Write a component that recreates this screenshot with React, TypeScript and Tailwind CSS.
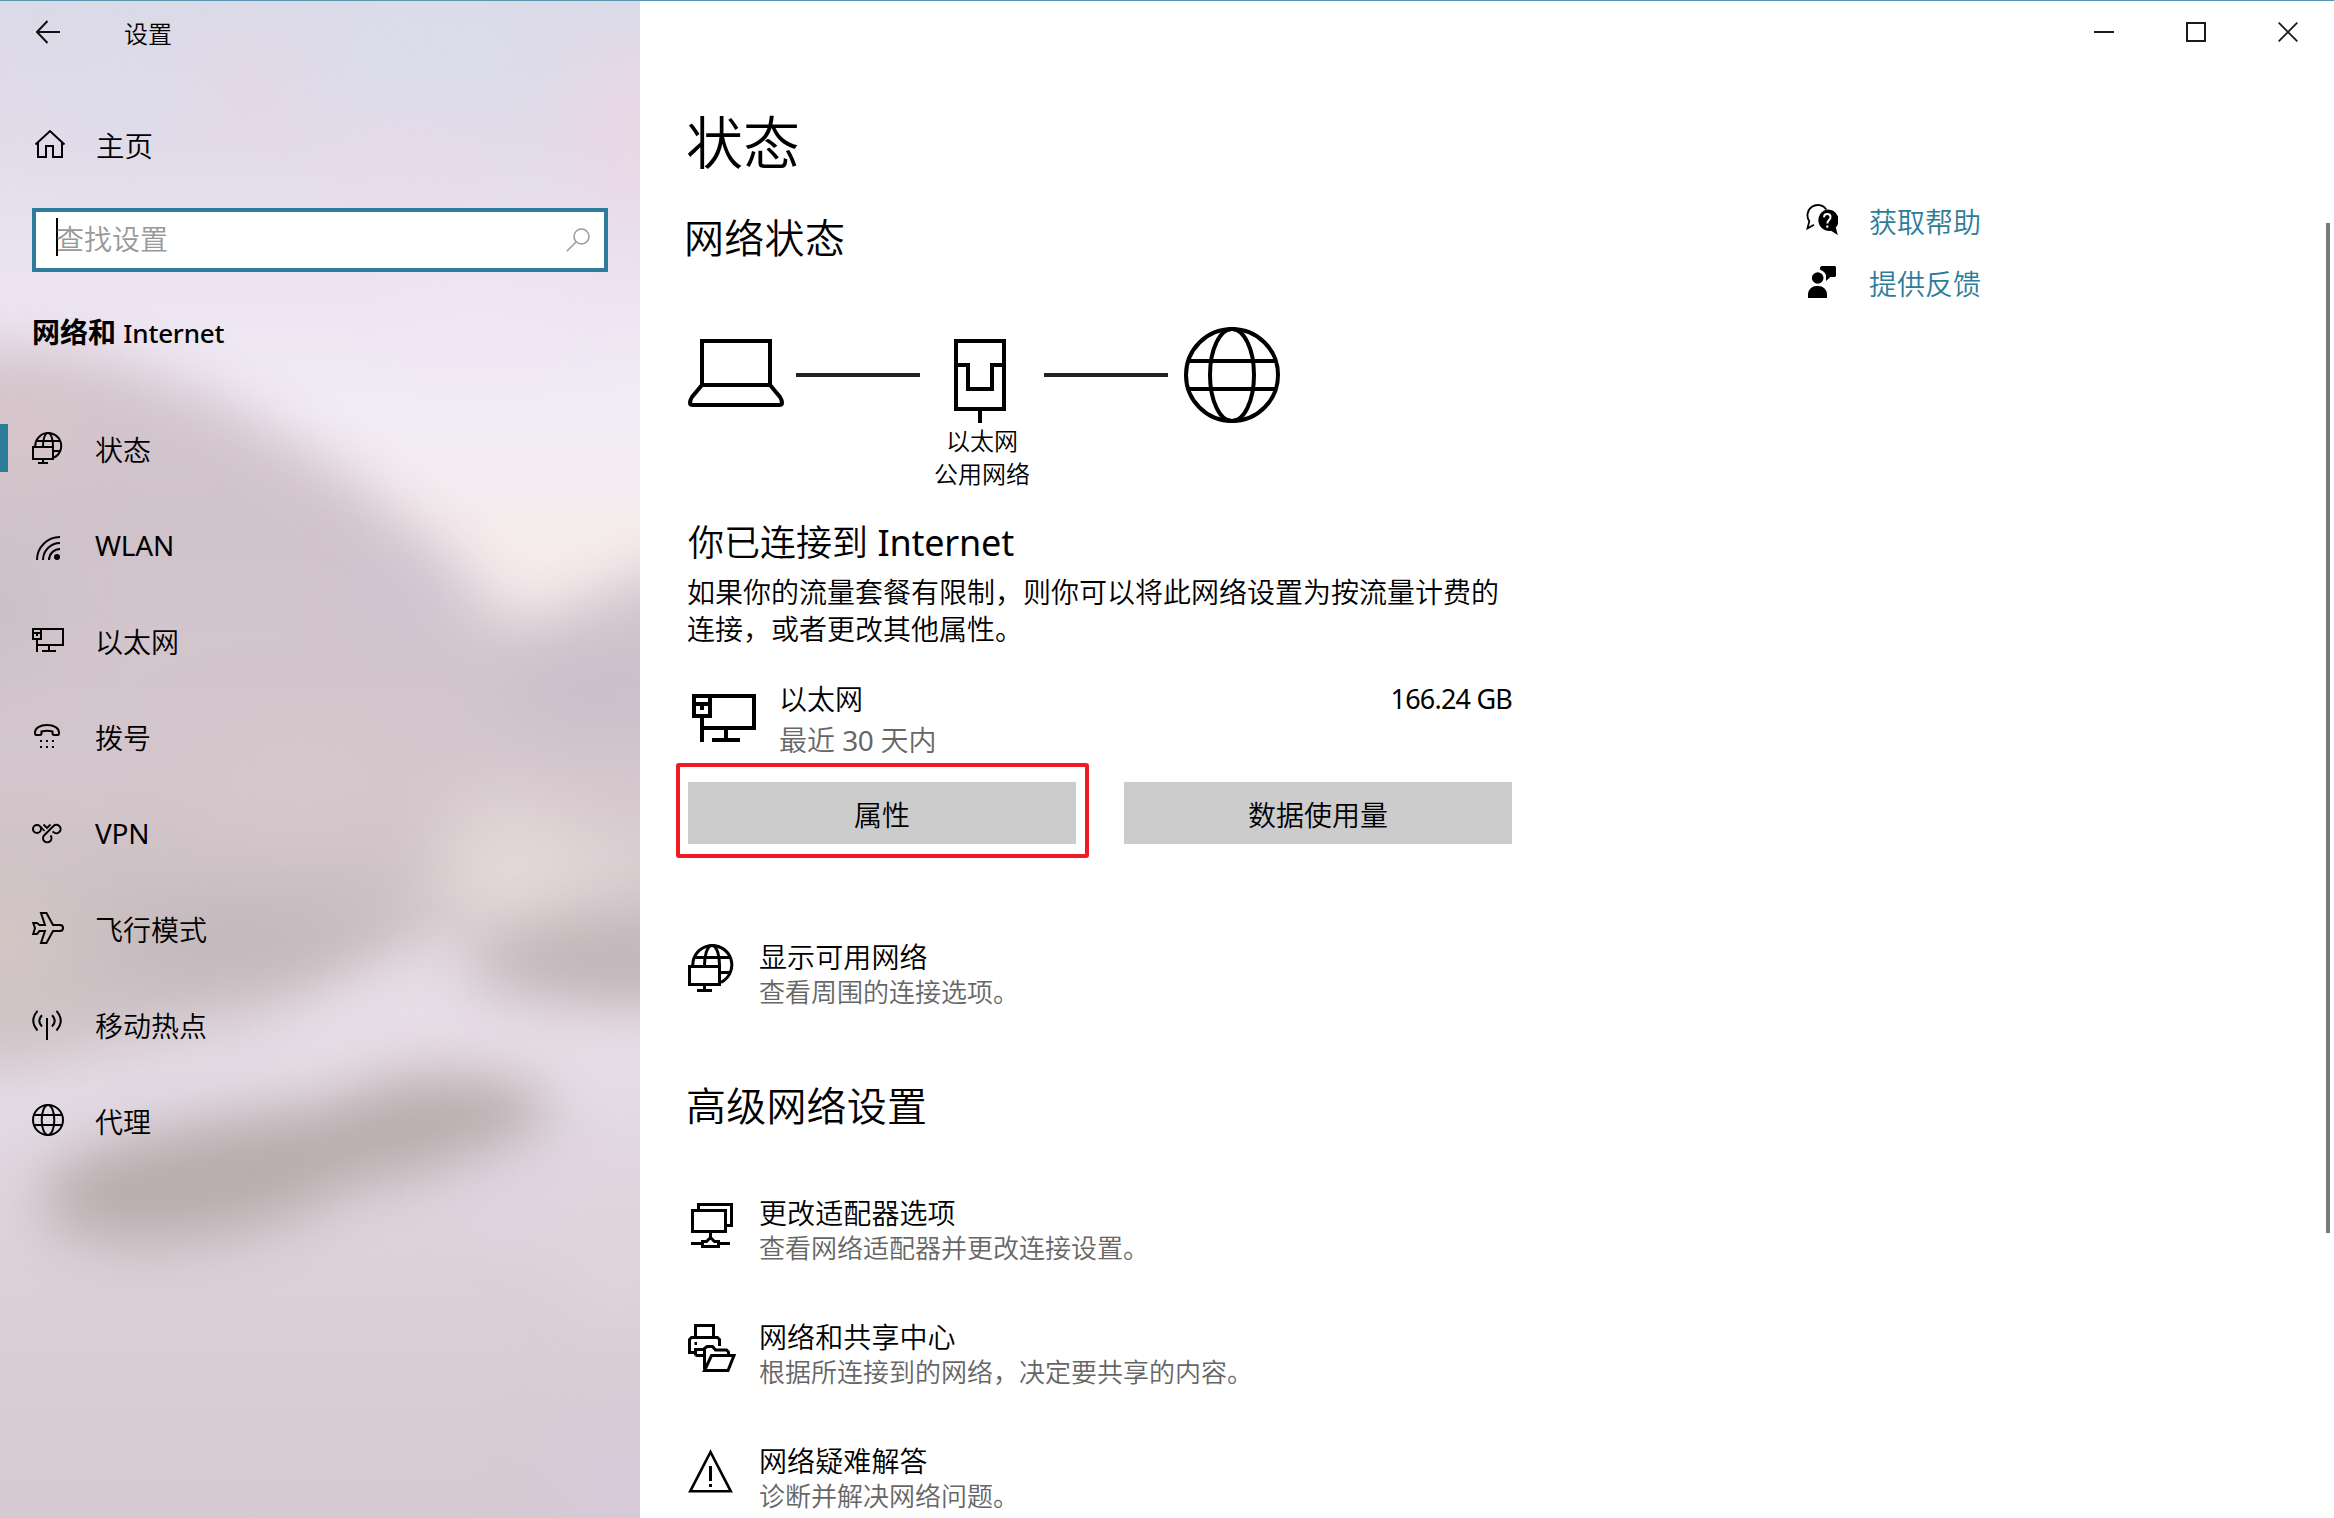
import React from "react";

type IconProps = { size?: number };

function Stroke({ size = 32, box = 32, width = 2, children }: { size?: number; box?: number; width?: number; children: React.ReactNode }) {
  return (
    <svg width={size} height={size} viewBox={`0 0 ${box} ${box}`} fill="none" stroke="#000" strokeWidth={width} className="block shrink-0">
      {children}
    </svg>
  );
}

function StatusIcon({ size }: IconProps) {
  return (
    <Stroke size={size}>
      <path d="M3.2 14A13 13 0 1 1 22 25.6" />
      <path d="M4 9H28M22 19H28.2" />
      <path d="M11 14C11 8.500 12.500 1 16 1S21 8.500 21 14" />
      <rect x="1" y="15" width="20" height="12" />
      <path d="M11 27V31M6 31H16" />
    </Stroke>
  );
}

function WlanIcon() {
  return (
    <Stroke>
      <path d="M5 32A23 23 0 0 1 28 9M11 32A17 17 0 0 1 28 15M17 32A11 11 0 0 1 28 21" />
      <circle cx="25" cy="29" r="3" fill="#000" stroke="none" />
    </Stroke>
  );
}

function EthernetIcon({ size }: IconProps) {
  return (
    <Stroke size={size}>
      <path d="M9 5H31V21H5M1 5H9V15H1ZM1 9H9M5 9V12M5 15V28M17 21V27M10 27H24" />
    </Stroke>
  );
}

function DialIcon() {
  return (
    <Stroke>
      <path d="M4 15C3 15 3 14 3 12.500C3 8 8 5 15 5S27 8 27 12.500C27 14 27 15 26 15H22C21 15 20.500 14.500 20.500 13V11.500C17 10.500 13 10.500 9.500 11.500V13C9.500 14.500 9 15 8 15Z" />
      <path d="M8 21h2M14 21h2M20 21h2M8 27h2M14 27h2M20 27h2" />
    </Stroke>
  );
}

function VpnIcon() {
  return (
    <Stroke>
      <circle cx="5" cy="13" r="4" />
      <path d="M8.500 10.500L12.500 15M11.500 8.500L15 12L18.500 8.500" strokeWidth="1.800" />
      <path d="M12 19.500L21.500 10A4.200 4.200 0 1 1 22 16.500L20.500 15.500M18.500 19.500A4.200 4.200 0 1 1 12 19.500" />
    </Stroke>
  );
}

function PlaneIcon() {
  return (
    <Stroke>
      <path d="M9 1H14.500L21 13H28A3 3 0 0 1 28 19H21L14.500 31H9L13 19H7.500L5 22H1.200L3 16L1.200 11H5L7.500 13H13Z" />
    </Stroke>
  );
}

function HotspotIcon() {
  return (
    <Stroke>
      <path d="M15 10V32" />
      <path d="M5.500 2.800Q-3 12.500 5.500 22.500M24.500 2.800Q33 12.500 24.500 22.500M10 7.200Q4.500 12.800 10 18.500M20 7.200Q25.500 12.800 20 18.500" />
    </Stroke>
  );
}

function ProxyIcon() {
  return (
    <Stroke>
      <circle cx="16" cy="16" r="15" />
      <ellipse cx="16" cy="16" rx="6.300" ry="15" />
      <path d="M2 11H30M2 21H30" />
    </Stroke>
  );
}

function AdapterIcon() {
  return (
    <Stroke size={48} box={48} width={3}>
      <rect x="4.500" y="10.500" width="33" height="21" />
      <path d="M10.500 9V4.500H43.500V25.500H39M22.500 33V38M3 43.500H14M31 43.500H42" />
      <path d="M14.500 46.500V41.500H18.500L22.500 37.500L26.500 41.500H30.500V46.500Z" />
    </Stroke>
  );
}

function ShareIcon() {
  return (
    <Stroke size={48} box={48} width={3}>
      <path d="M7.500 14V1.500H25.500V14" />
      <path d="M7 28.500H1.500V15.500L3.500 13.500H29.500L31.500 15.500V22" />
      <path d="M7.500 31.500V25.500H15M7.500 31.500H15" />
      <path d="M6.500 19.500h2.500" />
      <path d="M16.500 45V24.500L19 22.500H24.500L27.500 26H38.500L40.500 28V31" />
      <path d="M16.500 46.500L23.500 31.500H46L40 46.500Z" />
    </Stroke>
  );
}

function WarningIcon() {
  return (
    <Stroke size={48} box={48} width={2.6}>
      <path d="M22.500 4L2.200 43.300H42.800Z" />
      <path d="M22.500 18V33M22.500 36V39" strokeWidth="3" />
    </Stroke>
  );
}

function HelpIcon() {
  return (
    <svg width="32" height="32" viewBox="0 0 32 32" className="block shrink-0">
      <path d="M20.300 5.500A10 10 0 1 0 3.300 17.200L1.500 24.500L8 20.800" fill="none" stroke="#000" strokeWidth="1.800" />
      <path d="M21.300 5.500A10.800 10.800 0 1 0 25 26.800L31.800 31L29.800 23.500A10.800 10.800 0 0 0 21.300 5.500Z" />
      <path d="M18 13.300C18 10.800 19.500 10 21.300 10S24.500 11.200 24.500 13.200C24.500 16 21.300 16 21.300 19.500" fill="none" stroke="#fff" strokeWidth="2" />
      <path d="M20.200 21.500h2.200v2.200h-2.200z" fill="#fff" />
    </svg>
  );
}

function FeedbackIcon() {
  return (
    <svg width="32" height="32" viewBox="0 0 32 32" className="block shrink-0">
      <path d="M14 1.500L15.500 0H29L30 1V10L29 11H24.500L20 15V9Q18 5 14 3.500Z" />
      <circle cx="11.700" cy="12" r="7.600" fill="#fff" />
      <circle cx="11.700" cy="12" r="5.800" />
      <path d="M2 32V28A8.500 8.500 0 0 1 10.500 20H12.500A8.500 8.500 0 0 1 21 28V32Z" />
    </svg>
  );
}

function Backdrop() {
  return (
    <svg width="640" height="1518" viewBox="0 0 640 1518" preserveAspectRatio="none" colorInterpolationFilters="sRGB" className="absolute inset-0">
      <defs>
        <linearGradient id="sky" x1="0" y1="0" x2="0" y2="1">
          <stop offset="0" stopColor="#dcdae8" />
          <stop offset="0.100" stopColor="#e3dcea" />
          <stop offset="0.200" stopColor="#ede6f2" />
          <stop offset="0.270" stopColor="#f2ecf6" />
          <stop offset="0.360" stopColor="#f6ecec" />
          <stop offset="0.600" stopColor="#e4dbe3" />
          <stop offset="0.720" stopColor="#e4dbe5" />
          <stop offset="0.850" stopColor="#dccfd7" />
          <stop offset="1" stopColor="#d5c9d2" />
        </linearGradient>
        <linearGradient id="hill" x1="0" y1="340" x2="0" y2="1060" gradientUnits="userSpaceOnUse">
          <stop offset="0" stopColor="#d5c6ce" />
          <stop offset="0.250" stopColor="#d1c3cc" />
          <stop offset="0.600" stopColor="#d5c7cd" />
          <stop offset="0.820" stopColor="#cbc0c3" />
          <stop offset="1" stopColor="#cfc4c6" />
        </linearGradient>
        <filter id="b20" x="-50%" y="-50%" width="200%" height="200%"><feGaussianBlur stdDeviation="28" /></filter>
        <filter id="b35" x="-100%" y="-100%" width="300%" height="300%"><feGaussianBlur stdDeviation="38" /></filter>
      </defs>
      <rect width="640" height="1518" fill="url(#sky)" />
      <g filter="url(#b35)">
        <ellipse cx="430" cy="50" rx="110" ry="70" fill="#dbdcea" />
        <ellipse cx="120" cy="100" rx="60" ry="40" fill="#dcdceb" />
        <ellipse cx="250" cy="90" rx="50" ry="40" fill="#e3d7e6" />
        <ellipse cx="640" cy="140" rx="50" ry="80" fill="#ecd6e5" />
        <ellipse cx="410" cy="160" rx="70" ry="35" fill="#e8daea" />
        <ellipse cx="480" cy="310" rx="70" ry="30" fill="#f2e6f4" />
      </g>
      <path d="M-80 345L60 350C170 365 230 400 300 445C380 490 420 540 480 605C520 640 560 630 600 595L740 540V1020L560 990L470 920C400 960 330 975 280 990C200 1025 80 1060 -80 1075Z" fill="url(#hill)" filter="url(#b20)" />
      <g filter="url(#b35)">
        <ellipse cx="10" cy="430" rx="60" ry="40" fill="#d8c6c8" />
        <ellipse cx="0" cy="610" rx="40" ry="60" fill="#c9bec4" />
        <ellipse cx="410" cy="590" rx="45" ry="30" fill="#cfc4d5" />
        <ellipse cx="600" cy="690" rx="100" ry="40" fill="#c9bdc9" />
        <ellipse cx="300" cy="780" rx="110" ry="50" fill="#d6c7cb" />
        <ellipse cx="0" cy="940" rx="60" ry="60" fill="#d4c6c4" />
        <ellipse cx="240" cy="945" rx="130" ry="30" fill="#bfb5b7" />
        <ellipse cx="510" cy="870" rx="75" ry="75" fill="#e5d9da" />
        <ellipse cx="620" cy="860" rx="60" ry="40" fill="#e1d5d7" />
      </g>
      <g filter="url(#b20)">
        <path d="M280 1050Q340 985 430 965Q520 1010 700 1030V1070H280Z" fill="#e7dde6" />
        <ellipse cx="590" cy="965" rx="125" ry="34" fill="#bfb4b6" />
        <path d="M40 1190C70 1140 200 1120 330 1105C400 1060 520 1070 550 1105C560 1140 430 1175 350 1188C280 1235 180 1248 110 1242C60 1235 40 1220 40 1190Z" fill="#b8adad" />
      </g>
      <g filter="url(#b35)">
        <ellipse cx="520" cy="1200" rx="70" ry="15" fill="#e0d4e4" />
        <ellipse cx="620" cy="1260" rx="45" ry="50" fill="#e2d6db" />
        <ellipse cx="620" cy="1480" rx="60" ry="60" fill="#d6cbda" />
      </g>
    </svg>
  );
}

const navItems = [
  { label: "状态", icon: <StatusIcon /> },
  { label: "WLAN", icon: <WlanIcon />, latin: true },
  { label: "以太网", icon: <EthernetIcon /> },
  { label: "拨号", icon: <DialIcon /> },
  { label: "VPN", icon: <VpnIcon />, latin: true },
  { label: "飞行模式", icon: <PlaneIcon /> },
  { label: "移动热点", icon: <HotspotIcon /> },
  { label: "代理", icon: <ProxyIcon /> },
];

function Sidebar() {
  return (
    <aside className="relative h-full w-[640px] shrink-0 overflow-hidden">
      <Backdrop />
      <div className="relative flex flex-col">
        <div className="flex h-16 items-center pl-9">
          <svg width="24" height="24" viewBox="0 0 24 24" fill="none" stroke="#111" strokeWidth="2">
            <path d="M24 12H1M11.500 1L1 12L11.500 23" />
          </svg>
          <span className="ml-16 pt-1 text-2xl leading-8">设置</span>
        </div>
        <div className="mt-14 flex h-12 items-center pl-[34px]">
          <svg width="32" height="30" viewBox="0 0 32 30" fill="none" stroke="#000" strokeWidth="2">
            <path d="M1.500 15.500L16 2L30.500 15.500M4 13.500V28H12V17H19V28H28V13.500" />
          </svg>
          <span className="ml-[30px] pt-1 text-[28.500px] leading-10">主页</span>
        </div>
        <div className="mx-8 mt-10 flex h-16 items-center border-4 border-[#2d7d9a] bg-white pr-[14px] pl-5">
          <div className="-mt-1.5 h-[38px] w-0.5 bg-black" />
          <span className="-mt-0.5 -ml-0.5 grow text-[#999]">查找设置</span>
          <svg width="24" height="24" viewBox="0 0 24 24" fill="none" stroke="#999" strokeWidth="1.500">
            <circle cx="15.500" cy="8.500" r="7.500" />
            <path d="M10.300 13.700L0.800 23.200" />
          </svg>
        </div>
        <h2 className="mt-[38px] h-[46px] pl-8 leading-[44px] font-bold">
          网络和 <span className="text-[26px] font-medium tracking-[-0.2px]">Internet</span>
        </h2>
        <nav className="mt-11 flex flex-col">
          {navItems.map((item, i) => (
            <div key={item.label} className="flex h-24 items-center">
              <div className={i === 0 ? "h-12 w-2 bg-[#2d7d9a]" : "h-12 w-2"} />
              <div className="ml-6">{item.icon}</div>
              <span className={item.latin ? "ml-[31px] pt-0.5 font-normal tracking-[-0.2px]" : "ml-[31px] pt-[3px]"}>{item.label}</span>
            </div>
          ))}
        </nav>
      </div>
    </aside>
  );
}

function Diagram() {
  return (
    <div className="mt-[60px] flex h-24 items-center">
      <svg width="96" height="96" viewBox="0 0 96 96" fill="none" stroke="#000" strokeWidth="4">
        <path d="M14 58V14H82V58ZM14 58L4 70Q2 73 2 76Q2 78 5 78H91Q94 78 94 76Q94 73 92 70L82 58" />
      </svg>
      <div className="ml-3 h-1 w-[124px] bg-[#222]" />
      <svg width="124" height="96" viewBox="0 0 124 96" fill="none" stroke="#000" strokeWidth="4">
        <path d="M36 14H84V82H36ZM36 38H48V62H72V38H84M60 82V96" />
      </svg>
      <div className="h-1 w-[124px] bg-[#222]" />
      <svg width="96" height="96" viewBox="0 0 96 96" fill="none" stroke="#000" strokeWidth="4" className="ml-4">
        <circle cx="48" cy="48" r="46" />
        <ellipse cx="48" cy="48" rx="22" ry="46" />
        <path d="M4 34H92M4 62H92" />
      </svg>
    </div>
  );
}

function LinkItem({ icon, title, note }: { icon: React.ReactNode; title: string; note: string }) {
  return (
    <div className="flex h-[68px]">
      <div className="pt-1">{icon}</div>
      <div className="ml-[23px] leading-[34px]">
        <div className="tracking-[0.1px]">{title}</div>
        <div className="pt-px text-[26px] text-[#666]">{note}</div>
      </div>
    </div>
  );
}

export default function App() {
  return (
    <div className="relative flex h-[1518px] w-[2334px] overflow-hidden bg-white font-['Noto_Sans','Noto_Sans_CJK_SC',sans-serif] text-[28px] font-[350] text-black">
      <Sidebar />
      <main className="flex min-w-0 grow flex-col">
        <header className="flex h-16 shrink-0 items-center justify-end gap-[72px] pr-9">
          <div className="h-0.5 w-5 bg-[#1a1a1a]" />
          <div className="size-5 border-2 border-[#1a1a1a]" />
          <svg width="20" height="20" viewBox="0 0 20 20" stroke="#1a1a1a" strokeWidth="1.800">
            <path d="M0.700 0.700L19.300 19.300M19.300 0.700L0.700 19.300" />
          </svg>
        </header>
        <div className="flex pl-12">
          <section className="w-[824px]">
            <h1 className="mt-[38px] -ml-[2px] text-[57px] leading-[80px] font-[350]">状态</h1>
            <h2 className="mt-7 -ml-[4px] text-[40px] leading-[56px] font-[350] tracking-[0.3px]">网络状态</h2>
            <div className="h-px" />
            <Diagram />
            <div className="mt-px h-[65px] w-[588px] text-center text-2xl leading-[33px]">
              <div>以太网</div>
              <div>公用网络</div>
            </div>
            <h3 className="mt-8 text-4xl leading-[44px] font-[350]">
              你已连接到 <span className="font-normal tracking-[-0.2px]">Internet</span>
            </h3>
            <p className="mt-[9px] -ml-px leading-[37px]">如果你的流量套餐有限制，则你可以将此网络设置为按流量计费的连接，或者更改其他属性。</p>
            <div className="mt-8 flex h-20 pl-1">
              <div className="pt-1.5">
                <EthernetIcon size={64} />
              </div>
              <div className="ml-[23px] grow leading-10">
                <div className="-mt-px mb-px">以太网</div>
                <div className="text-[#666]">
                  最近 <span className="font-normal tracking-[-0.6px]">30</span> 天内
                </div>
              </div>
              <div className="-mt-px text-[27px] leading-10 font-normal tracking-[-0.8px]">166.24 GB</div>
            </div>
            <div className="relative mt-[22px] flex gap-12">
              <button className="h-[62px] w-[388px] bg-[#ccc] pt-1">属性</button>
              <button className="h-[62px] w-[388px] bg-[#ccc] pt-1">数据使用量</button>
              <div className="absolute -top-[19px] -left-[12px] h-[95px] w-[413px] rounded-[3px] border-4 border-[#ed1c24]" />
            </div>
            <div className="mt-24">
              <LinkItem icon={<StatusIcon size={48} />} title="显示可用网络" note="查看周围的连接选项。" />
            </div>
            <h2 className="mt-[70px] -ml-[2px] text-[40px] leading-[56px] font-[350] tracking-[0.2px]">高级网络设置</h2>
            <div className="mt-[62px] flex flex-col gap-14">
              <LinkItem icon={<AdapterIcon />} title="更改适配器选项" note="查看网络适配器并更改连接设置。" />
              <LinkItem icon={<ShareIcon />} title="网络和共享中心" note="根据所连接到的网络，决定要共享的内容。" />
              <LinkItem icon={<WarningIcon />} title="网络疑难解答" note="诊断并解决网络问题。" />
            </div>
          </section>
          <section className="mt-[125px] ml-[294px] leading-[62px] text-[#2d7d9a]">
            <div className="flex h-[62px] items-center gap-[31px]">
              <HelpIcon />
              <span className="pt-1">获取帮助</span>
            </div>
            <div className="flex h-[62px] items-center gap-[31px]">
              <FeedbackIcon />
              <span className="pt-1">提供反馈</span>
            </div>
          </section>
        </div>
      </main>
      <div className="absolute top-[223px] right-1 h-[1010px] w-1 bg-[#7a7a7a]" />
      <div className="absolute inset-x-0 top-0 h-px bg-[#5697b0]" />
    </div>
  );
}
